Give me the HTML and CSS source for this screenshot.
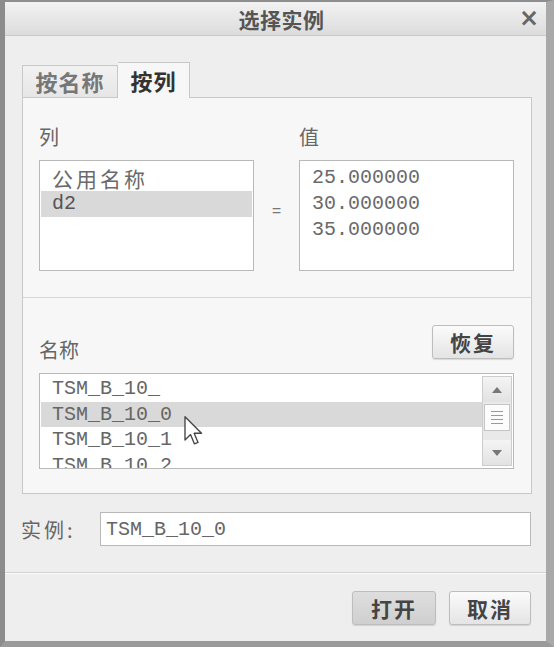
FILE: index.html
```html
<!DOCTYPE html>
<html lang="zh">
<head>
  <meta charset="UTF-8">
  <title>选择实例</title>
  <link rel="stylesheet" href="styles.css">
</head>
<body>
  <div class="window">
    <div class="titlebar">
      <span class="title">选择实例</span>
      <span class="close">×</span>
    </div>

    <div class="content">
      <div class="tabs">
        <div class="tab">按名称</div>
        <div class="tab active">按列</div>
      </div>

      <div class="panel">
        <div class="section cols">
          <div class="col">
            <div class="label">列</div>
            <div class="listbox">
              <div class="row cjk">公用名称</div>
              <div class="row selected">d2</div>
            </div>
          </div>
          <div class="eq">=</div>
          <div class="col">
            <div class="label">值</div>
            <div class="listbox">
              <div class="row">25.000000</div>
              <div class="row">30.000000</div>
              <div class="row">35.000000</div>
            </div>
          </div>
        </div>

        <div class="section names">
          <div class="names-head">
            <div class="label">名称</div>
            <button class="btn">恢复</button>
          </div>
          <div class="listbox namelist">
            <div class="rows">
              <div class="row">TSM_B_10_</div>
              <div class="row selected">TSM_B_10_0</div>
              <div class="row">TSM_B_10_1</div>
              <div class="row">TSM_B_10_2</div>
            </div>
            <div class="scrollbar">
              <div class="sb-btn"><span class="arrow up"></span></div>
              <div class="sb-thumb"><span></span><span></span><span></span><span></span></div>
              <div class="sb-track"></div>
              <div class="sb-btn"><span class="arrow down"></span></div>
            </div>
          </div>
          <svg class="cursor" width="20" height="30" viewBox="0 0 13 20">
            <path d="M0.5 0.5 L0.5 16 L4.2 12.4 L6.8 18.6 L9.2 17.6 L6.6 11.5 L11.5 11.5 Z" fill="#fff" stroke="#444" stroke-width="0.9" stroke-linejoin="round"/>
          </svg>
        </div>
      </div>

      <div class="instance-row">
        <label class="inst-label">实例:</label>
        <input class="inst-input" type="text" value="TSM_B_10_0">
      </div>
    </div>

    <div class="footer">
      <button class="btn pressed">打开</button>
      <button class="btn">取消</button>
    </div>
  </div>
</body>
</html>
```

FILE: styles.css
```css
body {
  margin: 0;
  padding: 0;
  background-color: #eeeeee;
  font-family: "Noto Sans CJK SC", "Liberation Sans", sans-serif;
}

.window {
  width: 554px;
  height: 647px;
  box-sizing: border-box;
  border-top: 2px solid #8e8e8e;
  border-left: 5px solid #8c8c8c;
  border-right: 8px solid #a9a9a9;
  border-bottom: 6px solid #9a9a9a;
  background-color: #eeeeee;
  display: flex;
  flex-direction: column;
}

.titlebar {
  height: 33px;
  border-bottom: 1px solid #c9c9c9;
  background: linear-gradient(#f2f2f2, #dcdcdc);
  display: flex;
  align-items: center;
  justify-content: center;
  position: relative;
}

.title {
  font-size: 21px;
  font-weight: bold;
  color: #555;
  letter-spacing: 0.5px;
  margin-left: 12px;
}

.close {
  position: absolute;
  right: 7px;
  top: 2px;
  font-family: "DejaVu Sans", sans-serif;
  font-size: 24px;
  font-weight: bold;
  color: #666;
}

.content {
  padding: 26px 14px 26px 17px;
  border-bottom: 1px solid #d2d2d2;
  box-shadow: 0 1px 0 #fafafa;
}

.tabs {
  display: flex;
  align-items: flex-end;
}

.tab {
  box-sizing: border-box;
  height: 32px;
  width: 96px;
  border: 1px solid #c8c8c8;
  border-bottom: none;
  background: linear-gradient(#f2f2f2, #e6e6e6);
  font-size: 22px;
  line-height: 30px;
  color: #777;
  font-weight: bold;
  text-align: center;
  letter-spacing: 1px;
}

.tab.active {
  height: 36px;
  width: 72px;
  margin-bottom: -1px;
  border-left: none;
  background: #f7f7f7;
  color: #333;
  position: relative;
  line-height: 34px;
  z-index: 1;
}

.panel {
  border: 1px solid #c8c8c8;
  background-color: #f7f7f7;
}

.section {
  padding: 27px 17px 26px 16px;
}

.cols {
  display: grid;
  grid-template-columns: 1fr 45px 1fr;
  border-bottom: 1px solid #d8d8d8;
}

.label {
  font-size: 20px;
  line-height: 24px;
  color: #666;
  margin-bottom: 11px;
}

.eq {
  align-self: center;
  text-align: center;
  margin-top: 28px;
  font-family: "Liberation Mono", monospace;
  font-size: 16px;
  color: #777;
}

.listbox {
  box-sizing: border-box;
  height: 111px;
  border: 1px solid #b9b9b9;
  background-color: #fff;
  padding: 4px 1px;
}

.row {
  height: 26px;
  line-height: 26px;
  padding-left: 11px;
  font-family: "Liberation Mono", monospace;
  font-size: 20px;
  color: #6a6a6a;
  white-space: nowrap;
}

.row.cjk {
  font-family: "Noto Sans CJK SC", sans-serif;
  font-size: 21px;
  letter-spacing: 3px;
}

.row.selected {
  background-color: #d9d9d9;
  color: #555;
}

.names {
  position: relative;
  padding-top: 27px;
  padding-bottom: 24px;
}

.names-head {
  display: flex;
  justify-content: space-between;
  align-items: flex-end;
  margin-bottom: 14px;
}

.names-head .label {
  line-height: 18px;
  margin-bottom: 0;
}

.btn {
  box-sizing: border-box;
  height: 34px;
  width: 82px;
  border: 1px solid #bdbdbd;
  border-radius: 3px;
  background: linear-gradient(#fbfbfb, #e4e4e4);
  font-family: "Noto Sans CJK SC", sans-serif;
  font-size: 21px;
  font-weight: bold;
  color: #444;
  letter-spacing: 2px;
  padding: 0;
  box-shadow: 0 1px 1px rgba(0, 0, 0, 0.12);
}

.btn.pressed {
  width: 84px;
  background: linear-gradient(#dedede, #cfcfcf);
}

.namelist {
  height: 96px;
  padding: 2px 1px 0 1px;
  display: flex;
  overflow: hidden;
}

.rows {
  flex: 1;
  overflow: hidden;
}

.namelist .row {
  height: 25.5px;
  line-height: 25.5px;
  color: #666;
}

.scrollbar {
  width: 28px;
  margin-top: 0;
  margin-bottom: 2px;
  border: 1px solid #cdcdcd;
  background-color: #e9e9e9;
  display: flex;
  flex-direction: column;
}

.sb-btn {
  height: 25px;
  background: linear-gradient(#f4f4f4, #e2e2e2);
  display: flex;
  align-items: center;
  justify-content: center;
}

.arrow {
  width: 0;
  height: 0;
  border-left: 5px solid transparent;
  border-right: 5px solid transparent;
}

.arrow.up {
  border-bottom: 6px solid #777;
}

.arrow.down {
  border-top: 6px solid #777;
}

.sb-thumb {
  box-sizing: border-box;
  height: 27px;
  margin: 2px 1px 0;
  border: 1px solid #c4c4c4;
  background-color: #fcfcfc;
  display: flex;
  flex-direction: column;
  justify-content: center;
  align-items: center;
  gap: 3px;
}

.sb-thumb span {
  width: 12px;
  height: 1px;
  background-color: #9a9a9a;
}

.sb-track {
  flex: 1;
}

.cursor {
  position: absolute;
  left: 161px;
  top: 118px;
}

.instance-row {
  display: flex;
  align-items: center;
  margin-top: 18px;
}

.inst-label {
  width: 79px;
  margin-left: -1px;
  font-size: 20px;
  color: #666;
  letter-spacing: 3px;
}

.inst-input {
  flex: 1;
  box-sizing: border-box;
  height: 34px;
  margin-right: 1px;
  border: 1px solid #b9b9b9;
  background-color: #fff;
  padding: 0 5px;
  font-family: "Liberation Mono", monospace;
  font-size: 20px;
  color: #666;
  outline: none;
}

.footer {
  flex: 1;
  display: flex;
  justify-content: flex-end;
  align-items: flex-start;
  gap: 13px;
  padding: 18px 15px 0 0;
}
```
